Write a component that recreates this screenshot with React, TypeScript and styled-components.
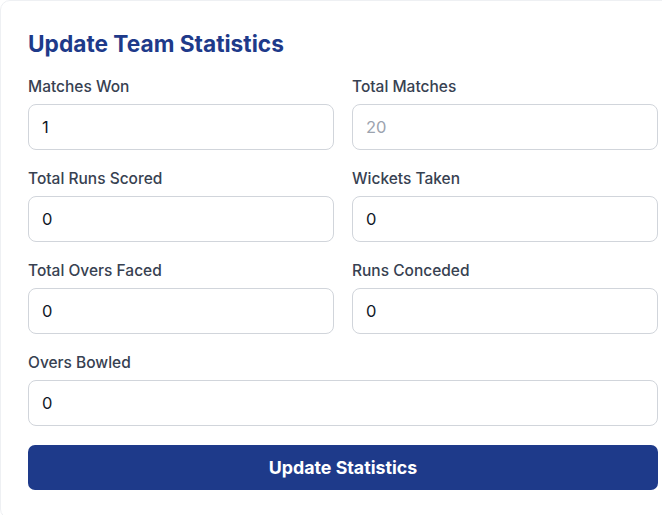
import React from "react";
import styled, { createGlobalStyle } from "styled-components";

const Global = createGlobalStyle`
  html, body { margin: 0; padding: 0; overflow: hidden; background: #ffffff; }
  body { font-family: Inter, "Noto Sans", "Liberation Sans", sans-serif; }
  * { box-sizing: border-box; }
`;

const Card = styled.form`
  width: 686px;
  background: #ffffff;
  border: 1px solid #eef0f3;
  border-radius: 10px;
  padding: 28px 27px 28px 27px;
  display: flex;
  flex-direction: column;
`;

const Title = styled.h2`
  margin: 0 0 17px 0;
  font-size: 22.7px;
  line-height: 30px;
  font-weight: 700;
  color: #1e3a8a;
`;

const Grid = styled.div`
  display: grid;
  grid-template-columns: 1fr 1fr;
  column-gap: 18px;
  row-gap: 18px;
`;

const Field = styled.label<{ $full?: boolean }>`
  display: flex;
  flex-direction: column;
  grid-column: ${(p) => (p.$full ? "1 / -1" : "auto")};
`;

const LabelText = styled.span`
  font-size: 15.5px;
  line-height: 22px;
  font-weight: 500;
  color: #374151;
  margin-bottom: 6px;
`;

const Input = styled.input`
  height: 46px;
  width: 100%;
  border: 1px solid #d1d5db;
  border-radius: 8px;
  padding: 0 13px;
  font-family: inherit;
  font-size: 16.5px;
  color: #111827;
  background: #ffffff;
  outline: none;
  &::placeholder { color: #9ca3af; }
`;

const Button = styled.button`
  margin-top: 19px;
  height: 45px;
  width: 100%;
  border: none;
  border-radius: 7px;
  background: #1e3a8a;
  color: #ffffff;
  font-family: inherit;
  font-size: 17.8px;
  font-weight: 700;
  cursor: pointer;
`;

const fields: { label: string; value?: string; placeholder?: string; full?: boolean }[] = [
  { label: "Matches Won", value: "1" },
  { label: "Total Matches", placeholder: "20" },
  { label: "Total Runs Scored", value: "0" },
  { label: "Wickets Taken", value: "0" },
  { label: "Total Overs Faced", value: "0" },
  { label: "Runs Conceded", value: "0" },
  { label: "Overs Bowled", value: "0", full: true },
];

export default function App() {
  return (
    <>
      <Global />
      <Card onSubmit={(e) => e.preventDefault()}>
        <Title>Update Team Statistics</Title>
        <Grid>
          {fields.map((f) => (
            <Field key={f.label} $full={f.full}>
              <LabelText>{f.label}</LabelText>
              <Input type="number" defaultValue={f.value} placeholder={f.placeholder} />
            </Field>
          ))}
        </Grid>
        <Button type="submit">Update Statistics</Button>
      </Card>
    </>
  );
}
